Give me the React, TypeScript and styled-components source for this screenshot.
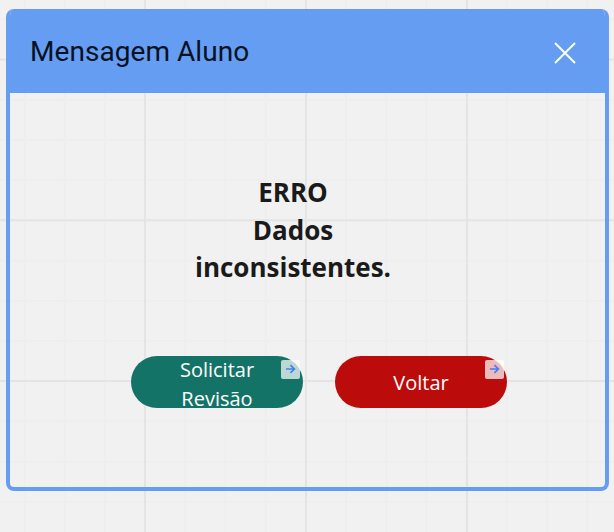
import React from 'react';
import styled, { createGlobalStyle } from 'styled-components';

const GlobalStyle = createGlobalStyle`
  * { box-sizing: border-box; }
  body { margin: 0; background: #f1f1f1; }
`;

const Board = styled.main`
  width: 614px;
  height: 532px;
  overflow: hidden;
  padding: 9px 5px 41px 6px;
  font-family: 'Open Sans', 'Noto Sans', sans-serif;
  background-color: #f1f1f1;
  background-image:
    linear-gradient(90deg, #e4e4e4 2px, transparent 2px),
    linear-gradient(#e4e4e4 2px, transparent 2px),
    linear-gradient(90deg, #eeeeee 2px, transparent 2px),
    linear-gradient(#eeeeee 2px, transparent 2px);
  background-size: 161px 100%, 100% 160.7px, 40.2px 100%, 100% 40.2px;
  background-position: 144px 0, 0 58.6px, 23.6px 0, 0 18.6px;
`;

const Dialog = styled.section`
  display: flex;
  flex-direction: column;
  height: 482px;
  border: 4px solid #659df2;
  border-top: 0;
  border-radius: 8px;
  overflow: hidden;
`;

const Header = styled.header`
  display: flex;
  align-items: center;
  justify-content: space-between;
  flex: none;
  height: 84px;
  padding: 0 29.5px 0 20px;
  background: #659df2;
`;

const Title = styled.h1`
  margin: 2px 0 0;
  font: 400 28px/40px Roboto, sans-serif;
  letter-spacing: 0.06px;
  color: #07111f;
`;

const CloseButton = styled.button`
  display: flex;
  margin: 4px 0 0;
  padding: 0;
  border: 0;
  background: none;
  color: #fff;
`;

const Content = styled.div`
  display: flex;
  flex-direction: column;
  align-items: center;
  padding-top: 81px;
`;

const Message = styled.p`
  width: 220px;
  margin: 0 29px 0 0;
  font-size: 26px;
  font-weight: 700;
  line-height: 37.5px;
  text-align: center;
  color: #1a1a1a;
`;

const Actions = styled.div`
  display: flex;
  gap: 32px;
  margin: 69px 0 0 23px;
`;

const Action = styled.button<{ $color: string }>`
  position: relative;
  display: flex;
  align-items: center;
  justify-content: center;
  width: 172px;
  height: 52px;
  padding: 0 44px;
  border: 0;
  border-radius: 26px;
  background: ${({ $color }) => $color};
  color: #fff;
  font: 400 20px/29px 'Open Sans', 'Noto Sans', sans-serif;
`;

const Label = styled.span<{ $offset?: number }>`
  margin-top: ${({ $offset = 1 }) => $offset}px;
`;

const LinkBadge = styled.span`
  position: absolute;
  top: 4px;
  right: 3px;
  display: flex;
  align-items: center;
  justify-content: center;
  width: 19px;
  height: 19px;
  border-radius: 2px;
  background: rgba(255, 255, 255, 0.72);
`;

function LinkArrow() {
  return (
    <LinkBadge>
      <svg width="11" height="10" viewBox="0 0 11 10" fill="none" stroke="#4380f5" strokeWidth="1.7">
        <path d="M1 5H9.2M5.4 1.1L9.4 5L5.4 8.9" />
      </svg>
    </LinkBadge>
  );
}

export default function App() {
  return (
    <>
      <GlobalStyle />
      <Board>
        <Dialog>
          <Header>
            <Title>Mensagem Aluno</Title>
            <CloseButton aria-label="Fechar">
              <svg width="22" height="22" viewBox="0 0 22 22" stroke="currentColor" strokeWidth="2">
                <path d="M1 1L21 21M21 1L1 21" />
              </svg>
            </CloseButton>
          </Header>
          <Content>
            <Message>ERRO<br />Dados<br />inconsistentes.</Message>
            <Actions>
              <Action $color="#147367">
                <Label $offset={5}>Solicitar Revisão</Label>
                <LinkArrow />
              </Action>
              <Action $color="#bc0b0b">
                <Label>Voltar</Label>
                <LinkArrow />
              </Action>
            </Actions>
          </Content>
        </Dialog>
      </Board>
    </>
  );
}
